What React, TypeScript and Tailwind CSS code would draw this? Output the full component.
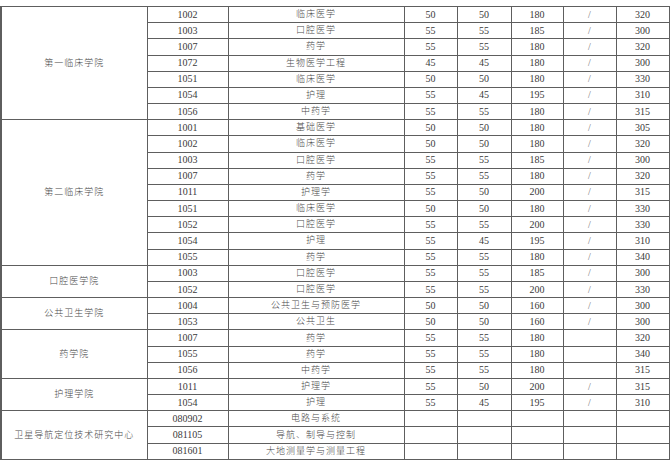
import React from 'react';

type Row = [string, string, string?, string?, string?, string?, string?];

const groups: { name: string; rows: Row[] }[] = [
  {
    name: '第一临床学院',
    rows: [
      ['1002', '临床医学', '50', '50', '180', '/', '320'],
      ['1003', '口腔医学', '55', '55', '185', '/', '300'],
      ['1007', '药学', '55', '55', '180', '/', '320'],
      ['1072', '生物医学工程', '45', '45', '180', '/', '300'],
      ['1051', '临床医学', '50', '50', '180', '/', '330'],
      ['1054', '护理', '55', '45', '195', '/', '310'],
      ['1056', '中药学', '55', '55', '180', '/', '315'],
    ],
  },
  {
    name: '第二临床学院',
    rows: [
      ['1001', '基础医学', '50', '50', '180', '/', '305'],
      ['1002', '临床医学', '50', '50', '180', '/', '320'],
      ['1003', '口腔医学', '55', '55', '185', '/', '300'],
      ['1007', '药学', '55', '55', '180', '/', '320'],
      ['1011', '护理学', '55', '50', '200', '/', '315'],
      ['1051', '临床医学', '50', '50', '180', '/', '330'],
      ['1052', '口腔医学', '55', '55', '200', '/', '330'],
      ['1054', '护理', '55', '45', '195', '/', '310'],
      ['1055', '药学', '55', '55', '180', '/', '340'],
    ],
  },
  {
    name: '口腔医学院',
    rows: [
      ['1003', '口腔医学', '55', '55', '185', '/', '300'],
      ['1052', '口腔医学', '55', '55', '200', '/', '330'],
    ],
  },
  {
    name: '公共卫生学院',
    rows: [
      ['1004', '公共卫生与预防医学', '50', '50', '160', '/', '300'],
      ['1053', '公共卫生', '50', '50', '160', '/', '300'],
    ],
  },
  {
    name: '药学院',
    rows: [
      ['1007', '药学', '55', '55', '180', '', '320'],
      ['1055', '药学', '55', '55', '180', '', '340'],
      ['1056', '中药学', '55', '55', '180', '', '315'],
    ],
  },
  {
    name: '护理学院',
    rows: [
      ['1011', '护理学', '55', '50', '200', '/', '315'],
      ['1054', '护理', '55', '45', '195', '/', '310'],
    ],
  },
  {
    name: '卫星导航定位技术研究中心',
    rows: [
      ['080902', '电路与系统'],
      ['081105', '导航、制导与控制'],
      ['081601', '大地测量学与测量工程'],
    ],
  },
];

const cell = 'border border-[#5e5e5e] text-center align-middle p-0 leading-none';
const cn = 'text-[9px] tracking-[1px] text-[#4a4a4a] font-light';
const num = 'text-[10px] text-[#3a3a3a]';

const App: React.FC = () => {
  return (
    <div className="w-[670px] h-[463px] bg-white pt-[6px]" style={{ fontFamily: '"Liberation Serif", "Noto Sans CJK SC", serif' }}>
      <table className="border-collapse table-fixed w-[669px] border-l-2 border-[#5e5e5e]">
        <colgroup>
          <col className="w-[146px]" />
          <col className="w-[81px]" />
          <col className="w-[176px]" />
          <col className="w-[53px]" />
          <col className="w-[54px]" />
          <col className="w-[52px]" />
          <col className="w-[53px]" />
          <col className="w-[53px]" />
        </colgroup>
        <tbody>
          {groups.map(g =>
            g.rows.map((r, i) => (
              <tr key={g.name + i} className="h-[16.18px]">
                {i === 0 && (
                  <td rowSpan={g.rows.length} className={`${cell} ${cn}`}>{g.name}</td>
                )}
                <td className={`${cell} ${num}`}>{r[0]}</td>
                <td className={`${cell} ${cn}`}>{r[1]}</td>
                <td className={`${cell} ${num}`}>{r[2] ?? ''}</td>
                <td className={`${cell} ${num}`}>{r[3] ?? ''}</td>
                <td className={`${cell} ${num}`}>{r[4] ?? ''}</td>
                <td className={`${cell} ${num} text-[#777]`}>{r[5] ?? ''}</td>
                <td className={`${cell} ${num}`}>{r[6] ?? ''}</td>
              </tr>
            ))
          )}
        </tbody>
      </table>
    </div>
  );
};

export default App;
